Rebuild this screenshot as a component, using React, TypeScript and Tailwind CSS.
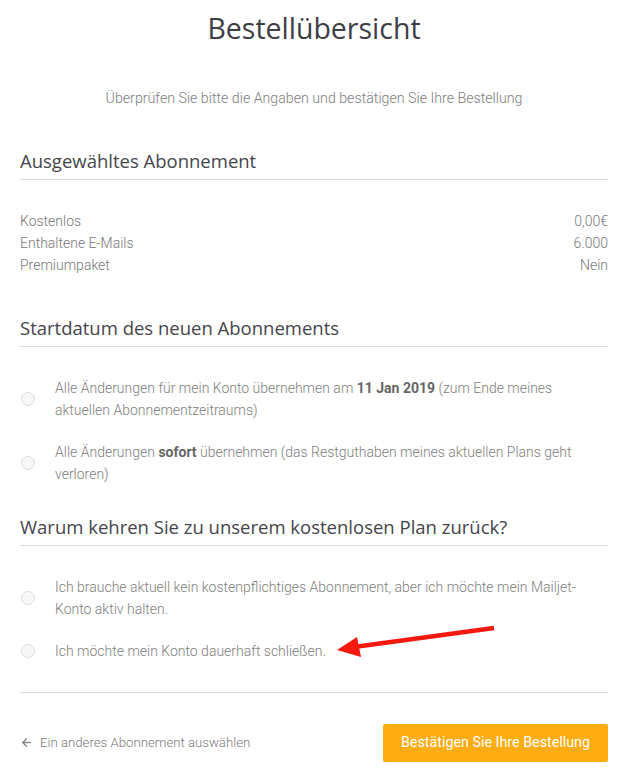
import { ArrowLeft } from "lucide-react";

const heading = "font-['Open_Sans',sans-serif]";
const body = "font-['Roboto',sans-serif]";

function SectionTitle({ children }: { children: React.ReactNode }) {
  return (
    <div className="border-b border-[#dcdcdc] pb-[5px]">
      <h2 className={`${heading} text-[18.5px] leading-[26px] font-medium text-[#45454c]`}>{children}</h2>
    </div>
  );
}

function Radio({ children }: { children: React.ReactNode }) {
  return (
    <label className="flex items-center">
      <span className="ml-[1px] h-[14px] w-[14px] shrink-0 rounded-full border border-[#dedede] bg-[#f7f7f7]" />
      <span className={`${body} ml-[20px] max-w-[532px] text-[14px] leading-[22px] font-light text-[#808080] [&_b]:font-bold [&_b]:text-[#666]`}>
        {children}
      </span>
    </label>
  );
}

export default function App() {
  return (
    <div className="relative min-h-[776px] w-[628px] bg-white px-[20px]">
      <h1 className={`${heading} pt-[9px] text-center text-[28.5px] leading-[38px] font-medium text-[#3d3d45]`}>
        Bestellübersicht
      </h1>
      <p className={`${body} mt-[41px] text-center text-[14.2px] leading-[20px] font-light text-[#7d7d7d]`}>
        Überprüfen Sie bitte die Angaben und bestätigen Sie Ihre Bestellung
      </p>

      <div className="mt-[40px]">
        <SectionTitle>Ausgewähltes Abonnement</SectionTitle>
        <div className={`${body} mt-[30px] text-[14px] leading-[22px] font-light text-[#777]`}>
          <div className="flex justify-between"><span>Kostenlos</span><span>0,00€</span></div>
          <div className="flex justify-between"><span>Enthaltene E-Mails</span><span>6.000</span></div>
          <div className="flex justify-between"><span>Premiumpaket</span><span>Nein</span></div>
        </div>
      </div>

      <div className="mt-[39px]">
        <SectionTitle>Startdatum des neuen Abonnements</SectionTitle>
        <div className="mt-[30px] flex flex-col gap-[20px]">
          <Radio>
            Alle Änderungen für mein Konto übernehmen am <b>11 Jan 2019</b> (zum Ende meines aktuellen Abonnementzeitraums)
          </Radio>
          <Radio>
            Alle Änderungen <b>sofort</b> übernehmen (das Restguthaben meines aktuellen Plans geht verloren)
          </Radio>
        </div>
      </div>

      <div className="mt-[29px]">
        <SectionTitle>Warum kehren Sie zu unserem kostenlosen Plan zurück?</SectionTitle>
        <div className="mt-[30px] flex flex-col gap-[20px]">
          <Radio>
            Ich brauche aktuell kein kostenpflichtiges Abonnement, aber ich möchte mein Mailjet-Konto aktiv halten.
          </Radio>
          <Radio>Ich möchte mein Konto dauerhaft schließen.</Radio>
        </div>
      </div>

      <div className="mt-[30px] border-t border-[#dcdcdc]" />

      <div className="mt-[31px] flex items-center justify-between">
        <a className={`${body} flex items-center gap-[7px] text-[13.2px] font-light text-[#7a7a7a]`}>
          <ArrowLeft size={13} strokeWidth={2.5} className="text-[#8a8a8a]" />
          Ein anderes Abonnement auswählen
        </a>
        <button className={`${body} h-[38px] w-[225px] rounded-[2px] bg-[#fdac11] text-[14.3px] text-white`}>
          Bestätigen Sie Ihre Bestellung
        </button>
      </div>

      <svg className="pointer-events-none absolute left-0 top-0" width="628" height="776">
        <line x1="494" y1="628" x2="354" y2="647" stroke="#f5190f" strokeWidth="4.5" strokeLinecap="butt" />
        <polygon points="337,650 357,637 361,657" fill="#f5190f" />
      </svg>
    </div>
  );
}
